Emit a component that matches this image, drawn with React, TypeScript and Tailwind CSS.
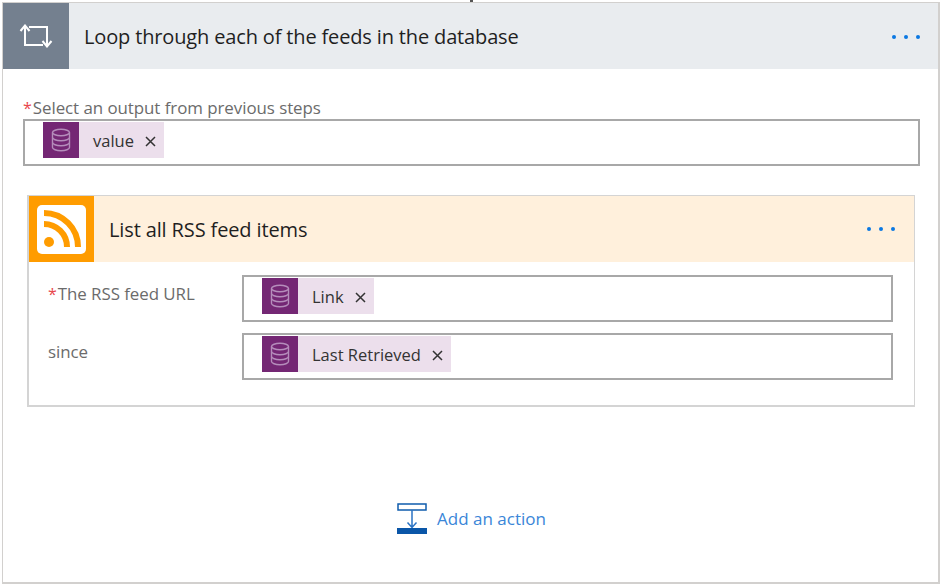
const FONT = "font-['Open_Sans','Noto_Sans',sans-serif]";

function Db() {
  return (
    <svg width="20" height="24" viewBox="0 0 20 24" fill="none" stroke="#b58dbb" strokeWidth="1.4">
      <ellipse cx="10" cy="4.5" rx="8.500" ry="3.200" />
      <path d="M1.500 4.500v15c0 1.700 3.800 3.200 8.500 3.200s8.500-1.500 8.500-3.200v-15" />
      <path d="M1.500 9.500c0 1.700 3.800 3.200 8.500 3.200s8.500-1.500 8.500-3.200M1.500 14.500c0 1.700 3.800 3.200 8.500 3.200s8.500-1.500 8.500-3.200" />
    </svg>
  );
}

function Chip({ label }: { label: string }) {
  return (
    <div className="flex h-[36px] items-center bg-[#ecdfec]">
      <div className="flex h-[36px] w-[36px] items-center justify-center bg-[#742774]">
        <Db />
      </div>
      <span className="ml-[14px] pt-[2px] text-[16.5px] leading-none text-[#333333]">{label}</span>
      <svg className="ml-[11px] mr-[8px] mt-[2px]" width="11" height="11" viewBox="0 0 11 11" stroke="#333333" strokeWidth="1.500">
        <path d="M1 1l9 9M10 1l-9 9" />
      </svg>
    </div>
  );
}

function Dots() {
  return (
    <div className="flex items-center gap-[8px]">
      <span className="h-[4px] w-[4px] rounded-full bg-[#0a78e2]" />
      <span className="h-[4px] w-[4px] rounded-full bg-[#0a78e2]" />
      <span className="h-[4px] w-[4px] rounded-full bg-[#0a78e2]" />
    </div>
  );
}

function Star() {
  return <span className="mr-[1px] text-[16px] text-[#e8474c]">*</span>;
}

function Field({ label, required, children }: { label: string; required?: boolean; children: React.ReactNode }) {
  return (
    <div className="flex">
      <div className="w-[213px] pl-[19px] pt-[7px] text-[16.9px] leading-[24px] tracking-[-0.05px] text-[#6b6b6b]">
        {required && <Star />}
        {label}
      </div>
      <div className="flex h-[47px] w-[651px] items-start border-2 border-[#a8a8a8] pl-[18px] pt-[1px]">{children}</div>
    </div>
  );
}

export default function App() {
  return (
    <div className={`${FONT} relative h-[586px] w-[942px] overflow-hidden bg-white px-[2px] pb-[2px] pt-[2px]`}>
      <div className="absolute left-[470px] top-0 h-[2px] w-[3px] bg-[#555555]" />
      <div className="flex h-[582px] w-[938px] flex-col border border-[#d2d0ce] border-r-2 border-b-2">
        <div className="flex h-[66px] items-center bg-[#e9ecef]">
          <div className="flex h-[66px] w-[66px] items-center justify-center bg-[#74808f]">
            <svg width="34" height="24" viewBox="0 0 34 24" fill="none" stroke="#ffffff" strokeWidth="2">
              <path d="M1.500 7L6 1.500 10.500 7M6 2v19h18" />
              <path d="M23.500 17l4.500 5.500 4.500-5.500M28 22V3H10" />
            </svg>
          </div>
          <div className="ml-[15px] flex-1 pt-[2px] text-[20px] leading-none tracking-[-0.15px] text-[#1f1f1f]">
            Loop through each of the feeds in the database
          </div>
          <div className="mr-[18px] pt-[2px]">
            <Dots />
          </div>
        </div>

        <div className="ml-[20px] mt-[28px] text-[16.9px] leading-[22px] tracking-[-0.05px] text-[#6b6b6b]">
          <Star />Select an output from previous steps
        </div>
        <div className="ml-[20px] flex h-[47px] w-[897px] items-start border-2 border-[#a8a8a8] pl-[18px] pt-[1px]">
          <Chip label="value" />
        </div>

        <div className="ml-[24px] mt-[29px] flex h-[212px] w-[888px] flex-col border-2 border-[#d4d4d4] border-t border-r">
          <div className="flex h-[66px] items-center bg-[#fff0dc]">
            <div className="flex h-[66px] w-[65px] items-center justify-center bg-[#ff9c00]">
              <svg width="49" height="49" viewBox="0 0 49 49">
                <rect width="49" height="49" rx="5" fill="#ffffff" />
                <circle cx="12" cy="37" r="5" fill="#ff9c00" />
                <path d="M7 19a23 23 0 0 1 23 23" fill="none" stroke="#ff9c00" strokeWidth="6" />
                <path d="M7 8a34 34 0 0 1 34 34" fill="none" stroke="#ff9c00" strokeWidth="6" />
              </svg>
            </div>
            <div className="ml-[15px] flex-1 pt-[2px] text-[20px] leading-none tracking-[-0.13px] text-[#1f1f1f]">List all RSS feed items</div>
            <div className="mr-[19px]">
              <Dots />
            </div>
          </div>
          <div className="mt-[13px] flex flex-col gap-[11px]">
            <Field label="The RSS feed URL" required>
              <Chip label="Link" />
            </Field>
            <Field label="since">
              <Chip label="Last Retrieved" />
            </Field>
          </div>
        </div>

        <div className="mt-[96px] flex items-center justify-center pl-[2px]">
          <svg width="30" height="31" viewBox="0 0 30 31" fill="none">
            <rect x="1" y="1" width="28" height="6" stroke="#0f5cad" strokeWidth="1.500" fill="#ffffff" />
            <path d="M15 7v17M10.500 19.500L15 24.500l4.500-5" stroke="#2a73c4" strokeWidth="1.500" />
            <rect x="0" y="25" width="30" height="6" fill="#0a56a8" />
          </svg>
          <span className="ml-[10px] text-[17px] leading-none text-[#3a86d8]">Add an action</span>
        </div>
      </div>
    </div>
  );
}
